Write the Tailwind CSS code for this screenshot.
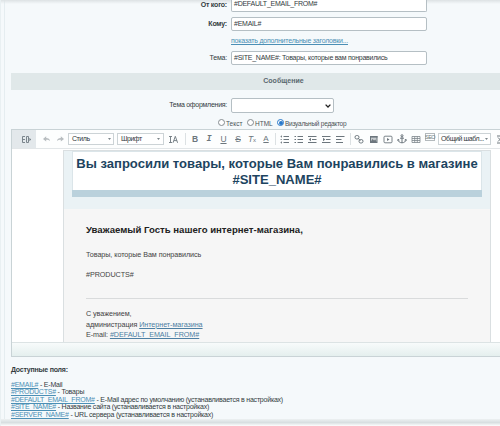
<!DOCTYPE html>
<html lang="ru">
<head>
<meta charset="utf-8">
<title>Почтовый шаблон</title>
<script src="https://cdn.jsdelivr.net/npm/@tailwindcss/browser@4"></script>
</head>
<body class="h-[426px] w-[500px] overflow-hidden bg-[#f5f9fb] font-['Liberation_Sans',Arial,sans-serif] text-[7px] text-[#333b3e]">
<div class="relative flex h-[426px] w-[500px] flex-col overflow-hidden border-l border-[#e9f0f2]">
  <div class="absolute inset-y-0 left-[3px] w-px bg-[#e5edf0]"></div>
  <div class="absolute inset-x-0 top-0 h-1 bg-linear-to-b from-[#dde2e4] to-transparent"></div>

  <!-- Поля письма -->
  <div class="relative h-[73px] shrink-0">
    <div class="flex h-[12px] items-center">
      <label class="w-[226px] pb-[2px] text-right font-bold tracking-[-0.2px]">От кого:</label>
      <div class="ml-1 flex h-[12px] w-[196px] items-center rounded-b-[2px] border border-t-0 border-[#b5bfc4] bg-white px-[2px] pb-[2px] text-[7px] tracking-[-0.25px]"><span>#DEFAULT_EMAIL_FROM#</span></div>
    </div>
    <div class="mt-[5px] flex h-[14px] items-center">
      <label class="w-[226px] text-right font-bold tracking-[-0.2px]">Кому:</label>
      <div class="ml-1 flex h-[14px] w-[196px] items-center rounded-[2px] border border-[#b5bfc4] bg-white px-[2px] tracking-[-0.25px]">#EMAIL#</div>
    </div>
    <div class="mt-[6px] ml-[230px] h-[8px] text-[7px] leading-[8px] tracking-[-0.22px] whitespace-nowrap text-[#4b8fb5] underline">показать дополнительные заголовки...</div>
    <div class="mt-[6px] flex h-[14px] items-center">
      <label class="w-[226px] text-right tracking-[-0.2px]">Тема:</label>
      <div class="ml-1 flex h-[14px] w-[196px] items-center rounded-[2px] border border-[#b5bfc4] bg-white px-[2px] tracking-[-0.25px] whitespace-nowrap">#SITE_NAME#: Товары, которые вам понравились</div>
    </div>
  </div>

  <div class="ml-[10px] flex h-[17px] shrink-0 items-center justify-center bg-[#e0e8e9] pl-[56px] text-[7px] font-bold text-[#59676e]"><span class="tracking-[0.05px]">Сообщение</span></div>

  <div class="mt-[8px] flex h-[15px] shrink-0 items-center">
    <label class="w-[226px] text-right tracking-[-0.27px]">Тема оформления:</label>
    <div class="ml-1 flex h-[15px] w-[103px] items-center justify-end rounded-[2px] border border-[#b5bfc4] bg-white pr-[2px]">
      <svg class="h-[4px] w-[6px]" viewBox="0 0 6 4"><path d="M.6.6 3 3 5.4.6" fill="none" stroke="#222" stroke-width="1.3"/></svg>
    </div>
  </div>
  <div class="mt-[5px] flex h-[9px] shrink-0 items-center text-[6.5px] leading-[9px] whitespace-nowrap text-[#4b5357]">
    <span class="ml-[217px] size-[7px] rounded-full border border-[#858c90] bg-white"></span><span class="w-[22px] pt-px pl-px">Текст</span>
    <span class="size-[7px] rounded-full border border-[#858c90] bg-white"></span><span class="w-[23px] pt-px pl-px">HTML</span>
    <span class="flex size-[7px] items-center justify-center rounded-full border border-[#2778ca] bg-white"><i class="size-[4px] rounded-full bg-[#2778ca]"></i></span><span class="pt-px pl-px tracking-[-0.25px]">Визуальный редактор</span>
  </div>

  <!-- Визуальный редактор -->
  <div class="mt-[2px] ml-[10px] flex h-[228px] w-[490px] shrink-0 flex-col border-y border-l border-[#c9d3d6] bg-white">
    <div class="flex h-[18px] shrink-0 items-center bg-[#fdfefe] text-[#6c767d]">
      <div class="flex h-[18px] w-[24px] shrink-0 items-center justify-center bg-[#e3e8eb] pl-[5px]">
        <svg class="h-[9px] w-[11px]" viewBox="0 0 11 9" fill="none" stroke="#7b858c"><path d="M4 1.500H1.500v6H4M1.500 4.500H4M5.500 1.500h2v6h-2zM7.500 3.500l2.500 1-2.500 1"/></svg>
      </div>
      <svg class="ml-[6px] h-[8px] w-[9px] shrink-0" viewBox="0 0 9 8"><path d="M1 4 4.200 1.200v1.700c2.200 0 3.700 1 3.800 3.200C7 5 6 4.800 4.200 4.800v1.700z" fill="#b8bdc0"/></svg>
      <svg class="ml-[5px] h-[8px] w-[9px] shrink-0" viewBox="0 0 9 8"><path d="M8 4 4.800 1.200v1.700C2.600 2.900 1.100 3.900 1 6.100 2 5 3 4.800 4.800 4.800v1.700z" fill="#b8bdc0"/></svg>
      <div class="ml-[3px] flex h-[12px] w-[46px] shrink-0 items-center justify-between border border-[#ccd3d6] bg-white pr-[2px] pl-[3px] text-[7px] tracking-[-0.45px] text-[#30383c]">Стиль<svg class="h-[2px] w-[3px]" viewBox="0 0 3 2"><path d="M0 0h3L1.500 2z" fill="#7d868b"/></svg></div>
      <div class="ml-[3px] flex h-[12px] w-[47px] shrink-0 items-center justify-between border border-[#ccd3d6] bg-white pr-[3px] pl-[3px] text-[7px] tracking-[-0.45px] text-[#30383c]">Шрифт<svg class="h-[2px] w-[3px]" viewBox="0 0 3 2"><path d="M0 0h3L1.500 2z" fill="#7d868b"/></svg></div>
      <svg class="ml-[4px] h-[9px] w-[11px] shrink-0" viewBox="0 0 11 9" fill="none" stroke="#6c767d" stroke-width=".9"><path d="M2.500 1.500v6M1 1.500h3M1 7.500h3M5 7.800 7.300 1.300 9.600 7.800M6 5.600h2.800"/></svg>
      <i class="ml-[6px] h-[12px] w-px shrink-0 bg-[#dce1e3]"></i>
      <div class="ml-[2px] flex w-[85px] shrink-0 text-center text-[8.500px] leading-[10px]">
        <b class="w-[14px]">B</b>
        <span class="w-[14px] font-['Liberation_Mono',monospace] font-bold italic">I</span>
        <span class="w-[15px] underline">U</span>
        <span class="w-[14px] line-through">S</span>
        <span class="w-[14px] italic">T<span class="text-[6px] not-italic">x</span></span>
        <span class="w-[14px] text-[8px] underline">A</span>
      </div>
      <i class="ml-[2px] h-[12px] w-px shrink-0 bg-[#dce1e3]"></i>
      <div class="ml-[4px] flex shrink-0 gap-[5px]">
        <svg class="h-[9px] w-[9px]" viewBox="0 0 9 9" fill="none" stroke="#6c767d"><path d="M3.500 1.500H9M3.500 4.500H9M3.500 7.500H9"/><path d="M.5 1.500H2M.5 4.500H2M.5 7.500H2M1.500.5v2M1.500 6.500v2" stroke-width=".7"/></svg>
        <svg class="h-[9px] w-[9px]" viewBox="0 0 9 9" fill="none" stroke="#6c767d"><path d="M3.500 1.500H9M3.500 4.500H9M3.500 7.500H9M.5 1.500H2M.5 4.500H2M.5 7.500H2"/></svg>
        <svg class="h-[9px] w-[9px]" viewBox="0 0 9 9" fill="none" stroke="#6c767d"><path d="M0 1.500h8.500M4 4.500h4.500M0 7.500h8.500"/><path d="M3 2.700v3.600L.7 4.500z" fill="#6c767d" stroke="none"/></svg>
        <svg class="h-[9px] w-[9px]" viewBox="0 0 9 9" fill="none" stroke="#6c767d"><path d="M0 1.500h8.500M4 4.500h4.500M0 7.500h8.500"/><path d="M1 2.700v3.600l2.300-1.800z" fill="#6c767d" stroke="none"/></svg>
        <svg class="h-[9px] w-[9px]" viewBox="0 0 9 9" fill="none" stroke="#6c767d"><path d="M0 1.500h8.500M0 4.500h5.500M0 7.500h7"/></svg>
      </div>
      <i class="ml-[5px] h-[12px] w-px shrink-0 bg-[#dce1e3]"></i>
      <svg class="ml-[3px] h-[10px] w-[10px] shrink-0" viewBox="0 0 10 10" fill="none" stroke="#6c767d"><rect x="1" y="1.500" width="4" height="3.500" rx="1.700"/><rect x="5" y="5.500" width="4" height="3.500" rx="1.700"/><path d="m3.800 4 2.600 2.600"/></svg>
      <svg class="ml-[5px] h-[9px] w-[9px] shrink-0" viewBox="0 0 9 9"><rect x="1.500" y="1.500" width="6.500" height="6" fill="#c6cbce" stroke="#6c767d"/><path d="m1.500 7 2-3 1.500 1.500 1.300-1L8 7.500z" fill="#6c767d"/><path d="M1 1.800h7.500" stroke="#6c767d" stroke-width="1.600"/></svg>
      <svg class="ml-[5px] h-[9px] w-[10px] shrink-0" viewBox="0 0 10 9"><rect x="1" y="1.200" width="8" height="6.600" rx="1" fill="none" stroke="#6c767d" stroke-width=".9"/><path d="M4 3v3l2.500-1.500z" fill="#6c767d"/></svg>
      <svg class="ml-[4px] h-[10px] w-[10px] shrink-0" viewBox="0 0 10 10" fill="none" stroke="#6c767d"><circle cx="5" cy="1.700" r="1"/><path d="M5 2.800v6M3 4.200h4M1 5.500c.2 2.200 1.800 3.200 4 3.300 2.200-.1 3.800-1.100 4-3.300M.5 6.500 1.200 5.300l1.200.8M9.500 6.500 8.800 5.300l-1.200.8"/></svg>
      <svg class="ml-[4px] h-[9px] w-[10px] shrink-0" viewBox="0 0 10 9" fill="none" stroke="#7c858b" stroke-width=".8"><path d="M1 1.500h8v6H1zM1 3.500h8M1 5.500h8M3.700 1.500v6M6.300 1.500v6"/></svg>
      <div class="ml-[4px] mb-[4px] flex h-[8px] w-[10px] shrink-0 items-center justify-center border border-[#b4babd] text-[5.500px] leading-[6px] tracking-[-0.6px]">SEO</div>
      <div class="ml-[3px] flex h-[12px] w-[53px] shrink-0 items-center justify-between border border-[#ccd3d6] bg-white px-[2px] text-[7px] tracking-[-0.4px] whitespace-nowrap text-[#30383c]">Общий шабл...<svg class="h-[2px] w-[3px]" viewBox="0 0 3 2"><path d="M0 0h3L1.500 2z" fill="#7d868b"/></svg></div>
      <svg class="ml-[6px] h-[9px] w-[5px] shrink-0" viewBox="0 0 5 9" fill="none" stroke="#6c767d"><path d="M0 1h4M0 8h4M1 2.500l3 3M1 6.500l3-3"/></svg>
    </div>

    <div class="h-[194px] shrink-0 border-t border-[#e2e6e8] bg-white pt-px">
      <div class="ml-[51px] h-[192px] w-[428px] border-x border-t border-[#dadfe1] bg-[#f6f6f6]">
        <div class="h-[58px] bg-[#eaf2f5] px-[8px]">
          <div class="h-[39px] w-[410px] border border-b-0 border-[#dbe5e9] bg-white pt-[4px] text-center text-[13.050px] leading-[15.500px] font-bold whitespace-nowrap text-[#1d4460]">
            <p>Вы запросили товары, которые Вам понравились в магазине</p><p>#SITE_NAME#</p>
          </div>
          <div class="h-[7px] w-[410px] bg-[#bad1dc]"></div>
        </div>
        <div class="px-[22px] text-[7.200px] leading-[11px] tracking-[-0.060px] text-[#444]">
          <h2 class="pt-[14px] text-[9.600px] leading-[13px] font-bold tracking-normal whitespace-nowrap text-[#222]">Уважаемый Гость нашего интернет-магазина,</h2>
          <p class="mt-[13px]">Товары, которые Вам понравились</p>
          <p class="mt-[9px]">#PRODUCTS#</p>
          <div class="mt-[18px] h-px bg-[#d9dbdc]"></div>
          <div class="mt-[10px] leading-[10.500px]">
            <p>С уважением,</p>
            <p>администрация <a class="text-[#4d7fa3] underline">Интернет-магазина</a></p>
            <p>E-mail: <a class="text-[#4d7fa3] underline">#DEFAULT_EMAIL_FROM#</a></p>
          </div>
        </div>
      </div>
    </div>
    <div class="grow border-t border-[#dce3e4] bg-linear-to-b from-[#f8fbfb] to-[#e4efee]"></div>
  </div>

  <div class="ml-[10px] pt-[9px] text-[7px] leading-[7.600px] tracking-[-0.220px] whitespace-nowrap">
    <p class="font-bold">Доступные поля:</p>
    <div class="mt-[7px]">
      <p><a class="text-[#4b8fb5] underline">#EMAIL#</a> - E-Mail</p>
      <p><a class="text-[#4b8fb5] underline">#PRODUCTS#</a> - Товары</p>
      <p><a class="text-[#4b8fb5] underline">#DEFAULT_EMAIL_FROM#</a> - E-Mail адрес по умолчанию (устанавливается в настройках)</p>
      <p><a class="text-[#4b8fb5] underline">#SITE_NAME#</a> - Название сайта (устанавливается в настройках)</p>
      <p><a class="text-[#4b8fb5] underline">#SERVER_NAME#</a> - URL сервера (устанавливается в настройках)</p>
    </div>
  </div>
  <div class="absolute inset-x-0 bottom-0 h-[7px] bg-linear-to-b from-[#edf1f2] via-[#d8dfe1] to-[#fdfefe]"></div>
</div>
</body>
</html>
